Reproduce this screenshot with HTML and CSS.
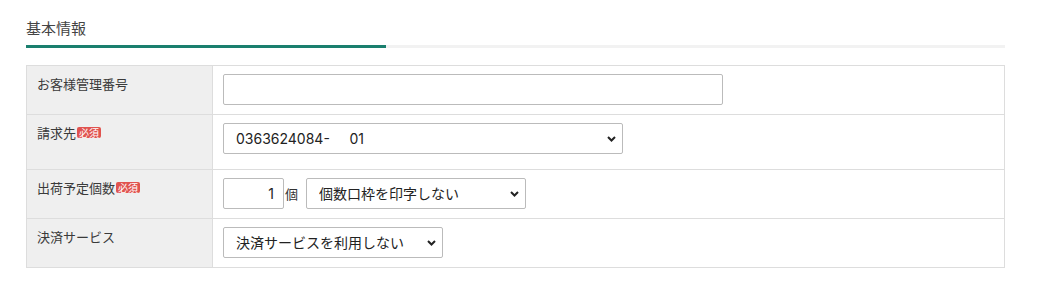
FILE: index.html
```html
<!DOCTYPE html>
<html lang="ja">
<head>
    <meta charset="UTF-8">
    <title>基本情報</title>
    <link rel="stylesheet" href="styles.css">
</head>
<body>
    <div class="section">
        <h2 class="section-title">基本情報</h2>
        <div class="section-bar"><div class="section-bar-fill"></div></div>

        <table class="form-table">
            <tr>
                <th>お客様管理番号</th>
                <td><input type="text" class="text-input wide"></td>
            </tr>
            <tr class="tall">
                <th>請求先<span class="required">必須</span></th>
                <td>
                    <span class="select-wrap w400">
                        <select class="select-box">
                            <option>0363624084-&nbsp;&nbsp;&nbsp;&nbsp;&nbsp;01</option>
                        </select>
                        <svg class="chevron" width="9" height="6" viewBox="0 0 9 6"><path d="M1 1l3.5 3.5L8 1" fill="none" stroke="#222" stroke-width="2"/></svg>
                    </span>
                </td>
            </tr>
            <tr>
                <th>出荷予定個数<span class="required">必須</span></th>
                <td>
                    <div class="inline-row">
                        <input type="text" class="text-input qty" value="1">
                        <span class="unit">個</span>
                        <span class="select-wrap w220">
                            <select class="select-box">
                                <option>個数口枠を印字しない</option>
                            </select>
                            <svg class="chevron" width="9" height="6" viewBox="0 0 9 6"><path d="M1 1l3.5 3.5L8 1" fill="none" stroke="#222" stroke-width="2"/></svg>
                        </span>
                    </div>
                </td>
            </tr>
            <tr>
                <th>決済サービス</th>
                <td>
                    <span class="select-wrap w220">
                        <select class="select-box">
                            <option>決済サービスを利用しない</option>
                        </select>
                        <svg class="chevron" width="9" height="6" viewBox="0 0 9 6"><path d="M1 1l3.5 3.5L8 1" fill="none" stroke="#222" stroke-width="2"/></svg>
                    </span>
                </td>
            </tr>
        </table>
    </div>
</body>
</html>
```

FILE: styles.css
```css
body {
    margin: 0;
    background: #fff;
    font-family: "Noto Sans CJK JP", "Noto Sans", sans-serif;
    color: #333;
}
.section {
    width: 979px;
    padding-left: 26px;
}
.section-title {
    margin: 0;
    padding-top: 18px;
    font-size: 15px;
    line-height: 20px;
    font-weight: normal;
    color: #444;
}
.section-bar {
    margin-top: 7px;
    height: 3px;
    background: #f2f2f2;
}
.section-bar-fill {
    width: 360px;
    height: 3px;
    background: #1a7f6e;
}
.form-table {
    margin-top: 17px;
    width: 100%;
    border-collapse: collapse;
    border: 1px solid #ddd;
}
.form-table th,
.form-table td {
    border: 1px solid #ddd;
    padding: 8px 10px 9px;
    vertical-align: top;
}
.form-table th {
    width: 165px;
    background: #efefef;
    text-align: left;
    font-weight: normal;
    font-size: 13px;
    line-height: 19px;
    color: #3a3a3a;
}
.form-table tr.tall td {
    padding-bottom: 15px;
}
.required {
    display: inline-block;
    margin-left: 1px;
    padding: 0 2px;
    background: #e0534f;
    color: #fff;
    font-size: 10px;
    line-height: 11px;
    border-radius: 2px;
    vertical-align: 1px;
}
.text-input {
    display: block;
    box-sizing: border-box;
    height: 31px;
    border: 1px solid #bbb;
    border-radius: 2px;
    padding: 0 9px;
    font-family: Inter, "Noto Sans CJK JP", sans-serif;
    font-size: 14px;
    color: #222;
    background: #fff;
}
.text-input.wide {
    width: 500px;
}
.text-input.qty {
    width: 61px;
    text-align: right;
}
.inline-row {
    display: flex;
    align-items: center;
}
.unit {
    margin: 0 8px 0 1px;
    font-size: 13px;
    color: #333;
}
.select-wrap {
    position: relative;
    display: block;
}
.inline-row .select-wrap {
    display: inline-block;
}
.w400 {
    width: 400px;
}
.w220 {
    width: 220px;
}
.select-box {
    display: block;
    box-sizing: border-box;
    width: 100%;
    height: 31px;
    border: 1px solid #bbb;
    border-radius: 2px;
    padding: 0 24px 0 12px;
    background: #fff;
    font-family: Inter, "Noto Sans CJK JP", sans-serif;
    font-size: 14px;
    color: #222;
    -webkit-appearance: none;
    appearance: none;
}
.chevron {
    position: absolute;
    right: 7px;
    top: 13px;
    pointer-events: none;
}
```
